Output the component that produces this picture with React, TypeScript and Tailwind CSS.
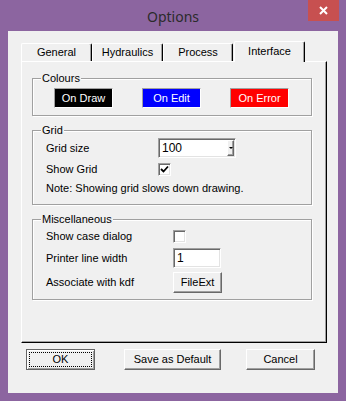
import React from "react";

const raised =
  "border-t border-l border-t-white border-l-white border-r border-b border-r-[#696969] border-b-[#696969] shadow-[inset_-1px_-1px_0_#a0a0a0]";
const sunken =
  "border-t border-l border-t-[#a0a0a0] border-l-[#a0a0a0] border-r border-b border-r-white border-b-white shadow-[inset_1px_1px_0_#696969,inset_-1px_-1px_0_#e3e3e3]";

function Group({ label, className, children }: { label: string; className?: string; children: React.ReactNode }) {
  return (
    <div
      className={
        "relative w-[280px] border border-[#a0a0a0] shadow-[1px_1px_0_#fff,inset_1px_1px_0_#fff] " + (className ?? "")
      }
    >
      <span className="absolute left-[8px] top-[-8px] bg-[#f0f0f0] px-[1px] text-[11px] leading-[14px]">{label}</span>
      {children}
    </div>
  );
}

function Tab({ label, selected, w }: { label: string; selected?: boolean; w: string }) {
  return (
    <div
      className={
        "flex items-center justify-center bg-[#f0f0f0] border-t border-l border-t-white border-l-white border-r border-r-black rounded-tl-[2px] rounded-tr-[2px] shadow-[inset_-1px_0_0_#a0a0a0] text-[11px] " +
        w +
        (selected ? " h-[21px] -mb-px relative z-10 ml-[1px] pb-[2px]" : " h-[18px]")
      }
    >
      {label}
    </div>
  );
}

function Check({ checked }: { checked?: boolean }) {
  return (
    <div className={"w-[13px] h-[13px] bg-white flex items-center justify-center " + sunken}>
      {checked && (
        <svg width="9" height="9" viewBox="0 0 9 9">
          <path d="M1 4 L3.5 6.5 L8 1.5" stroke="black" strokeWidth="1.8" fill="none" />
        </svg>
      )}
    </div>
  );
}

export default function App() {
  return (
    <div
      className="w-[346px] h-[401px] bg-[#8c65a0] flex flex-col text-black"
      style={{ fontFamily: '"Liberation Sans", Arial, sans-serif' }}
    >
      <div className="relative h-[31px] flex items-center justify-center">
        <span
          className="text-[14px] text-[#2b2b2b] mt-[1px]"
          style={{ fontFamily: '"Noto Sans", "Open Sans", sans-serif' }}
        >
          Options
        </span>
        <div className="absolute right-[7px] top-0 w-[31px] h-[21px] bg-[#c75050] flex items-center justify-center">
          <svg width="9" height="9" viewBox="0 0 9 9">
            <path d="M1 1 L8 8 M8 1 L1 8" stroke="white" strokeWidth="2" />
          </svg>
        </div>
      </div>
      <div className="ml-[8px] w-[330px] h-[362px] bg-[#f0f0f0] flex flex-col">
        <div className="ml-[13px] mt-[10px] h-[20px] flex items-end">
          <Tab label="General" w="w-[71px]" />
          <Tab label="Hydraulics" w="w-[71px]" />
          <Tab label="Process" w="w-[70px]" />
          <Tab label="Interface" w="w-[71px]" selected />
        </div>
        <div className="ml-[13px] w-[306px] h-[282px] border-t border-l border-t-white border-l-white border-r border-b border-r-black border-b-black shadow-[inset_-1px_-1px_0_#a0a0a0] pl-[10px] pt-[16px] text-[11px]">
          <Group label="Colours" className="h-[38px]">
            <div className="flex pl-[21px] pt-[9px] gap-[29px]">
              <div className="w-[59px] h-[20px] bg-black text-white flex items-center justify-center border-t border-l border-t-[#a0a0a0] border-l-[#a0a0a0] border-r border-b border-r-white border-b-white">
                On Draw
              </div>
              <div className="w-[59px] h-[20px] bg-[#0000ff] text-white flex items-center justify-center border-t border-l border-t-[#a0a0a0] border-l-[#a0a0a0] border-r border-b border-r-white border-b-white">
                On Edit
              </div>
              <div className="w-[59px] h-[20px] bg-[#ff0000] text-white flex items-center justify-center border-t border-l border-t-[#a0a0a0] border-l-[#a0a0a0] border-r border-b border-r-white border-b-white">
                On Error
              </div>
            </div>
          </Group>
          <Group label="Grid" className="h-[75px] mt-[14px]">
            <div className="pl-[13px] pt-[7px] flex flex-col">
              <div className="flex items-center h-[20px]">
                <span className="w-[112px]">Grid size</span>
                <div className={"w-[78px] h-[20px] bg-white flex items-center " + sunken}>
                  <span className="flex-1 pl-[3px] text-[12px]">100</span>
                  <div className={"w-[7px] h-[16px] mr-[1px] bg-[#f0f0f0] flex items-center justify-center " + raised}>
                    <div className="w-0 h-0 border-l-[2px] border-r-[2px] border-t-[2px] border-l-transparent border-r-transparent border-t-black" />
                  </div>
                </div>
              </div>
              <div className="flex items-center h-[13px] mt-[5px]">
                <span className="w-[112px]">Show Grid</span>
                <Check checked />
              </div>
              <div className="mt-[6px] h-[13px] flex items-center">Note: Showing grid slows down drawing.</div>
            </div>
          </Group>
          <Group label="Miscellaneous" className="h-[81px] mt-[14px]">
            <div className="pl-[13px] pt-[10px] flex flex-col">
              <div className="flex items-center h-[13px]">
                <span className="w-[127px]">Show case dialog</span>
                <Check />
              </div>
              <div className="flex items-center h-[20px] mt-[5px]">
                <span className="w-[127px]">Printer line width</span>
                <div className={"w-[48px] h-[20px] bg-white flex items-center pl-[3px] text-[12px] " + sunken}>1</div>
              </div>
              <div className="flex items-center h-[21px] mt-[4px]">
                <span className="w-[127px]">Associate with kdf</span>
                <div className={"w-[49px] h-[21px] bg-[#f0f0f0] flex items-center justify-center " + raised}>FileExt</div>
              </div>
            </div>
          </Group>
        </div>
        <div className="flex mt-[6px] text-[11px]">
          <div className="ml-[18px] w-[69px] h-[21px] border border-[#646464] bg-[#f0f0f0] p-[2px] shadow-[inset_1px_1px_0_#fff,inset_-1px_-1px_0_#a0a0a0]">
            <div className="w-full h-full border border-dotted border-black flex items-center justify-center">OK</div>
          </div>
          <div className={"ml-[29px] w-[97px] h-[21px] bg-[#f0f0f0] flex items-center justify-center " + raised}>
            Save as Default
          </div>
          <div className={"ml-[25px] w-[69px] h-[21px] bg-[#f0f0f0] flex items-center justify-center " + raised}>
            Cancel
          </div>
        </div>
      </div>
    </div>
  );
}
